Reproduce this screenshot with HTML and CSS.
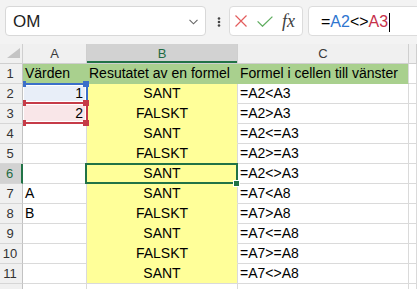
FILE: index.html
```html
<!DOCTYPE html>
<html>

<head>
  <meta http-equiv="Content-Type" content="text/html; charset=UTF-8">
  <title>Jämförelseoperatorer</title>
  <link rel="stylesheet" href="styles.css">
</head>

<body>

  <div id="verktyg">
    <div id="namnruta">
      <span>OM</span>
      <svg class="pil" width="9" height="6" viewBox="0 0 9 6">
        <polyline points="0.5,0.8 4.5,4.8 8.5,0.8" fill="none" stroke="#666" stroke-width="1.1" />
      </svg>
    </div>

    <svg class="prickar" width="4" height="10" viewBox="0 0 4 10">
      <circle cx="2" cy="1.5" r="1.3" fill="#444" />
      <circle cx="2" cy="5" r="1.3" fill="#444" />
      <circle cx="2" cy="8.5" r="1.3" fill="#444" />
    </svg>

    <div id="knappar">
      <svg class="avbryt" width="12" height="12" viewBox="0 0 12 12">
        <path d="M0.5 0.5 L11.5 11.5 M11.5 0.5 L0.5 11.5" stroke="#e35d5d" stroke-width="1.2" fill="none" />
      </svg>
      <svg class="ok" width="16" height="11" viewBox="0 0 16 11">
        <polyline points="0.6,5.4 5.5,10.2 15.4,0.6" stroke="#5fad5f" stroke-width="1.3" fill="none" />
      </svg>
      <span class="fx">fx</span>
    </div>

    <div id="formel">
      <span>=</span><span class="ref-bla">A2</span><span>&lt;&gt;</span><span class="ref-rod">A3</span><span class="markor"></span>
    </div>
  </div>

  <div id="blad">
    <!-- kolumnrubriker -->
    <div class="horn"><span class="triangel"></span></div>
    <div class="kh">A</div>
    <div class="kh vald">B</div>
    <div class="kh">C</div>
    <div class="kh tom"></div>

    <!-- rad 1 -->
    <div class="rh">1</div>
    <div class="c gron">Värden</div>
    <div class="c gron">Resutatet av en formel</div>
    <div class="c gron sista">Formel i cellen till vänster</div>
    <div class="c"></div>

    <!-- rad 2 -->
    <div class="rh">2</div>
    <div class="c hoger ref blaruta">1<span class="hand vo"></span><span class="hand ho"></span></div>
    <div class="c gul">SANT</div>
    <div class="c">=A2&lt;A3</div>
    <div class="c"></div>

    <!-- rad 3 -->
    <div class="rh">3</div>
    <div class="c hoger ref rodruta">2<span class="hand vo"></span><span class="hand ho"></span><span class="hand vn"></span><span class="hand hn"></span></div>
    <div class="c gul">FALSKT</div>
    <div class="c">=A2&gt;A3</div>
    <div class="c"></div>

    <!-- rad 4 -->
    <div class="rh">4</div>
    <div class="c"></div>
    <div class="c gul">SANT</div>
    <div class="c">=A2&lt;=A3</div>
    <div class="c"></div>

    <!-- rad 5 -->
    <div class="rh">5</div>
    <div class="c"></div>
    <div class="c gul">FALSKT</div>
    <div class="c">=A2&gt;=A3</div>
    <div class="c"></div>

    <!-- rad 6 -->
    <div class="rh vald">6</div>
    <div class="c"></div>
    <div class="c gul markerad">SANT<span class="fyllhandtag"></span></div>
    <div class="c">=A2&lt;&gt;A3</div>
    <div class="c"></div>

    <!-- rad 7 -->
    <div class="rh">7</div>
    <div class="c">A</div>
    <div class="c gul">SANT</div>
    <div class="c">=A7&lt;A8</div>
    <div class="c"></div>

    <!-- rad 8 -->
    <div class="rh">8</div>
    <div class="c">B</div>
    <div class="c gul">FALSKT</div>
    <div class="c">=A7&gt;A8</div>
    <div class="c"></div>

    <!-- rad 9 -->
    <div class="rh">9</div>
    <div class="c"></div>
    <div class="c gul">SANT</div>
    <div class="c">=A7&lt;=A8</div>
    <div class="c"></div>

    <!-- rad 10 -->
    <div class="rh">10</div>
    <div class="c"></div>
    <div class="c gul">FALSKT</div>
    <div class="c">=A7&gt;=A8</div>
    <div class="c"></div>

    <!-- rad 11 -->
    <div class="rh">11</div>
    <div class="c"></div>
    <div class="c gul sist">SANT</div>
    <div class="c">=A7&lt;&gt;A8</div>
    <div class="c"></div>

    <!-- rad 12, syns bara som en kant -->
    <div class="rh"></div>
    <div class="c"></div>
    <div class="c"></div>
    <div class="c"></div>
    <div class="c"></div>
  </div>

</body>

</html>
```

FILE: styles.css
```css
body {
  margin: 0;
  height: 289px;
  overflow: hidden;
  background: #fff;
  font-family: "Liberation Sans", Arial, sans-serif;
}

/* formelfältet */

#verktyg {
  height: 44px;
  box-sizing: border-box;
  padding-top: 6px;
  background: #f3f3f3;
  display: flex;
  align-items: flex-start;
}

#namnruta {
  margin-left: 5px;
  width: 201px;
  height: 30px;
  box-sizing: border-box;
  padding: 1px 7px 0 7px;
  background: #fff;
  border: 1px solid #d8d8d8;
  border-radius: 4px;
  display: flex;
  align-items: center;
  justify-content: space-between;
  font-size: 17px;
  color: #1e1e1e;
}

.prickar {
  margin: 11px 0 0 11px;
}

#knappar {
  margin-left: 8px;
  width: 74px;
  height: 30px;
  box-sizing: border-box;
  background: #fff;
  border: 1px solid #dcdcdc;
  border-radius: 4px;
  display: flex;
  align-items: center;
}

.avbryt {
  margin-left: 5px;
}

.ok {
  margin-left: 10px;
}

.fx {
  margin-left: 9px;
  font-family: "Liberation Serif", serif;
  font-style: italic;
  font-size: 18px;
  color: #404040;
}

#formel {
  margin-left: 5px;
  margin-right: -10px;
  flex: 1;
  height: 30px;
  box-sizing: border-box;
  padding: 2px 0 0 12px;
  background: #fff;
  border: 1px solid #dcdcdc;
  border-radius: 4px;
  display: flex;
  align-items: center;
  font-size: 16px;
  color: #000;
}

.ref-bla {
  color: #2e75d0;
}

.ref-rod {
  color: #c6304a;
}

.markor {
  width: 1px;
  height: 19px;
  margin-left: 1px;
  background: #000;
}

/* kalkylbladet */

#blad {
  display: grid;
  grid-template-columns: 23px 64px 151px 171px 1fr;
  grid-auto-rows: 20px;
  font-size: 14px;
}

#blad > div {
  box-sizing: border-box;
  border-right: 1px solid #dadada;
  border-bottom: 1px solid #dadada;
  line-height: 19px;
  white-space: nowrap;
}

.horn {
  background: #f0f0f0;
  position: relative;
}

.triangel {
  position: absolute;
  left: 7px;
  top: 4px;
  width: 13px;
  height: 10px;
  background: #c4c4c4;
  clip-path: polygon(100% 0, 100% 100%, 0 100%);
}

.kh {
  background: #f0f0f0;
  text-align: center;
  font-size: 13px;
  color: #3a3a3a;
}

#blad > .kh,
#blad > .horn {
  border-color: #cfcfcf;
}

.kh.vald {
  background: #d2d2d2;
  color: #1f6b43;
  box-shadow: inset 0 -2px 0 #217346;
}

.rh {
  background: #f0f0f0;
  text-align: center;
  padding-right: 2px;
  font-size: 13px;
  color: #333;
}

#blad > .rh {
  border-right-color: #c2c2c2;
  border-bottom-color: #d6d6d6;
}

#blad > .rh.vald {
  background: #d2d2d2;
  color: #1f6b43;
  border-right: 2px solid #217346;
}

.c {
  padding: 0 2px;
  color: #000;
}

#blad > .gron {
  background: #a9d08e;
  border-color: #a9d08e;
}

#blad > .gron.sista {
  border-right-color: #dadada;
}

#blad > .gul {
  background: #ffff99;
  border-bottom-color: #ffff99;
  text-align: center;
}

#blad > .gul.sist {
  border-bottom-color: #dadada;
}

.hoger {
  text-align: right;
  padding-right: 3px;
}

/* referensrutor runt A2 och A3 */

.ref {
  position: relative;
}

.ref::after {
  content: "";
  position: absolute;
  left: 0;
  right: -2px;
  border: 2px solid;
  border-left: none;
  box-shadow: inset 0 0 0 1px #fff;
}

.blaruta {
  background: #e8eef8;
}

.blaruta::after {
  top: -1px;
  bottom: -1px;
  border-color: #3b6fc9;
}

.rodruta {
  background: #f9e6e8;
}

.rodruta::after {
  top: -2px;
  bottom: -1px;
  border-color: #c63b48;
}

.hand {
  position: absolute;
  z-index: 2;
  width: 6px;
  height: 6px;
}

.blaruta .hand {
  background: #3b6fc9;
}

.rodruta .hand {
  background: #c63b48;
}

.hand.vo,
.hand.vn {
  left: 0;
  width: 3px;
}

.hand.ho,
.hand.hn {
  left: 60px;
}

.hand.vo,
.hand.ho {
  top: -3px;
}

.rodruta .hand.vo,
.rodruta .hand.ho {
  top: -4px;
}

.hand.vn,
.hand.hn {
  top: 16px;
}

/* markerad cell B6 */

.markerad {
  position: relative;
}

.markerad::after {
  content: "";
  position: absolute;
  top: -1px;
  left: -2px;
  right: -1px;
  bottom: -1px;
  border: 2px solid #217346;
}

.fyllhandtag {
  position: absolute;
  z-index: 2;
  left: 147px;
  top: 17px;
  width: 5px;
  height: 5px;
  background: #217346;
  outline: 1px solid #fff;
}
```
